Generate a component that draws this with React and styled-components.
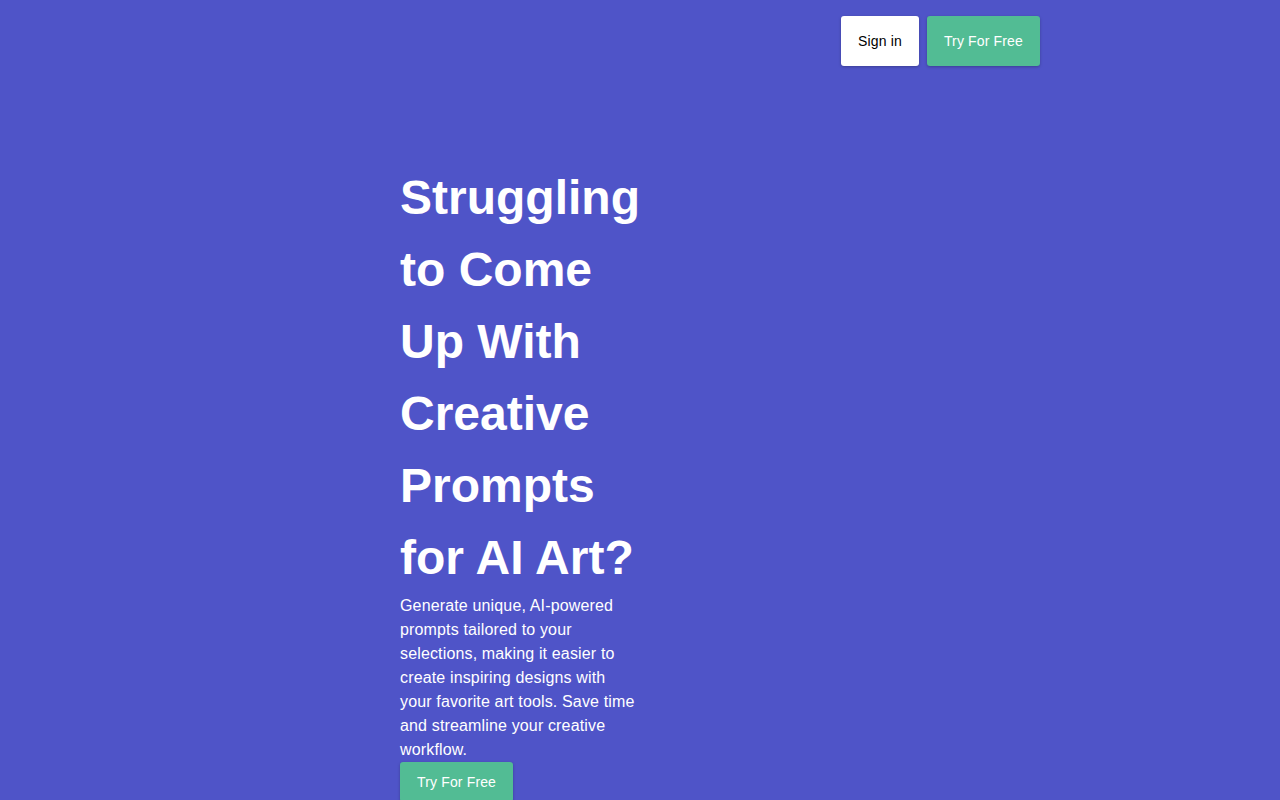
import React from "react";
import styled, { createGlobalStyle } from "styled-components";

const GlobalStyle = createGlobalStyle`
  html, body {
    margin: 0;
    padding: 0;
    background: #4f54c8;
    font-family: "Liberation Sans", Arial, Helvetica, sans-serif;
    color: #fff;
  }
  * {
    box-sizing: border-box;
  }
`;

const Page = styled.div`
  min-height: 100vh;
  background: #4f54c8;
`;

const Header = styled.header`
  max-width: 800px;
  margin: 0 auto;
  padding-top: 16px;
  display: flex;
  justify-content: flex-end;
  gap: 8px;
`;

const Button = styled.button`
  height: ${(p) => (p.$small ? "40px" : "50px")};
  padding: 0 17px;
  border: none;
  border-radius: 3px;
  font-family: inherit;
  font-size: 14px;
  letter-spacing: 0.15px;
  cursor: pointer;
  background: ${(p) => (p.$primary ? "#52bc94" : "#fff")};
  color: ${(p) => (p.$primary ? "#fff" : "#000")};
  box-shadow: 0 1px 3px rgba(0, 0, 0, 0.25);
`;

const Hero = styled.section`
  width: 480px;
  margin: 0 auto;
  padding-top: 96px;
  display: grid;
  grid-template-columns: 240px 240px;
`;

const Copy = styled.div`
  display: flex;
  flex-direction: column;
  align-items: flex-start;
`;

const Title = styled.h1`
  margin: 0;
  font-size: 48px;
  line-height: 72px;
  font-weight: 700;
  color: #fff;
`;

const Lead = styled.p`
  margin: 0;
  font-size: 16px;
  line-height: 24px;
  letter-spacing: 0.15px;
  color: #fff;
`;

export default function App() {
  return (
    <Page>
      <GlobalStyle />
      <Header>
        <Button>Sign in</Button>
        <Button $primary>Try For Free</Button>
      </Header>
      <Hero>
        <Copy>
          <Title>Struggling to Come Up With Creative Prompts for AI Art?</Title>
          <Lead>
            Generate unique, AI-powered prompts tailored to your selections,
            making it easier to create inspiring designs with your favorite art
            tools. Save time and streamline your creative workflow.
          </Lead>
          <Button $primary $small>
            Try For Free
          </Button>
        </Copy>
        <div />
      </Hero>
    </Page>
  );
}
